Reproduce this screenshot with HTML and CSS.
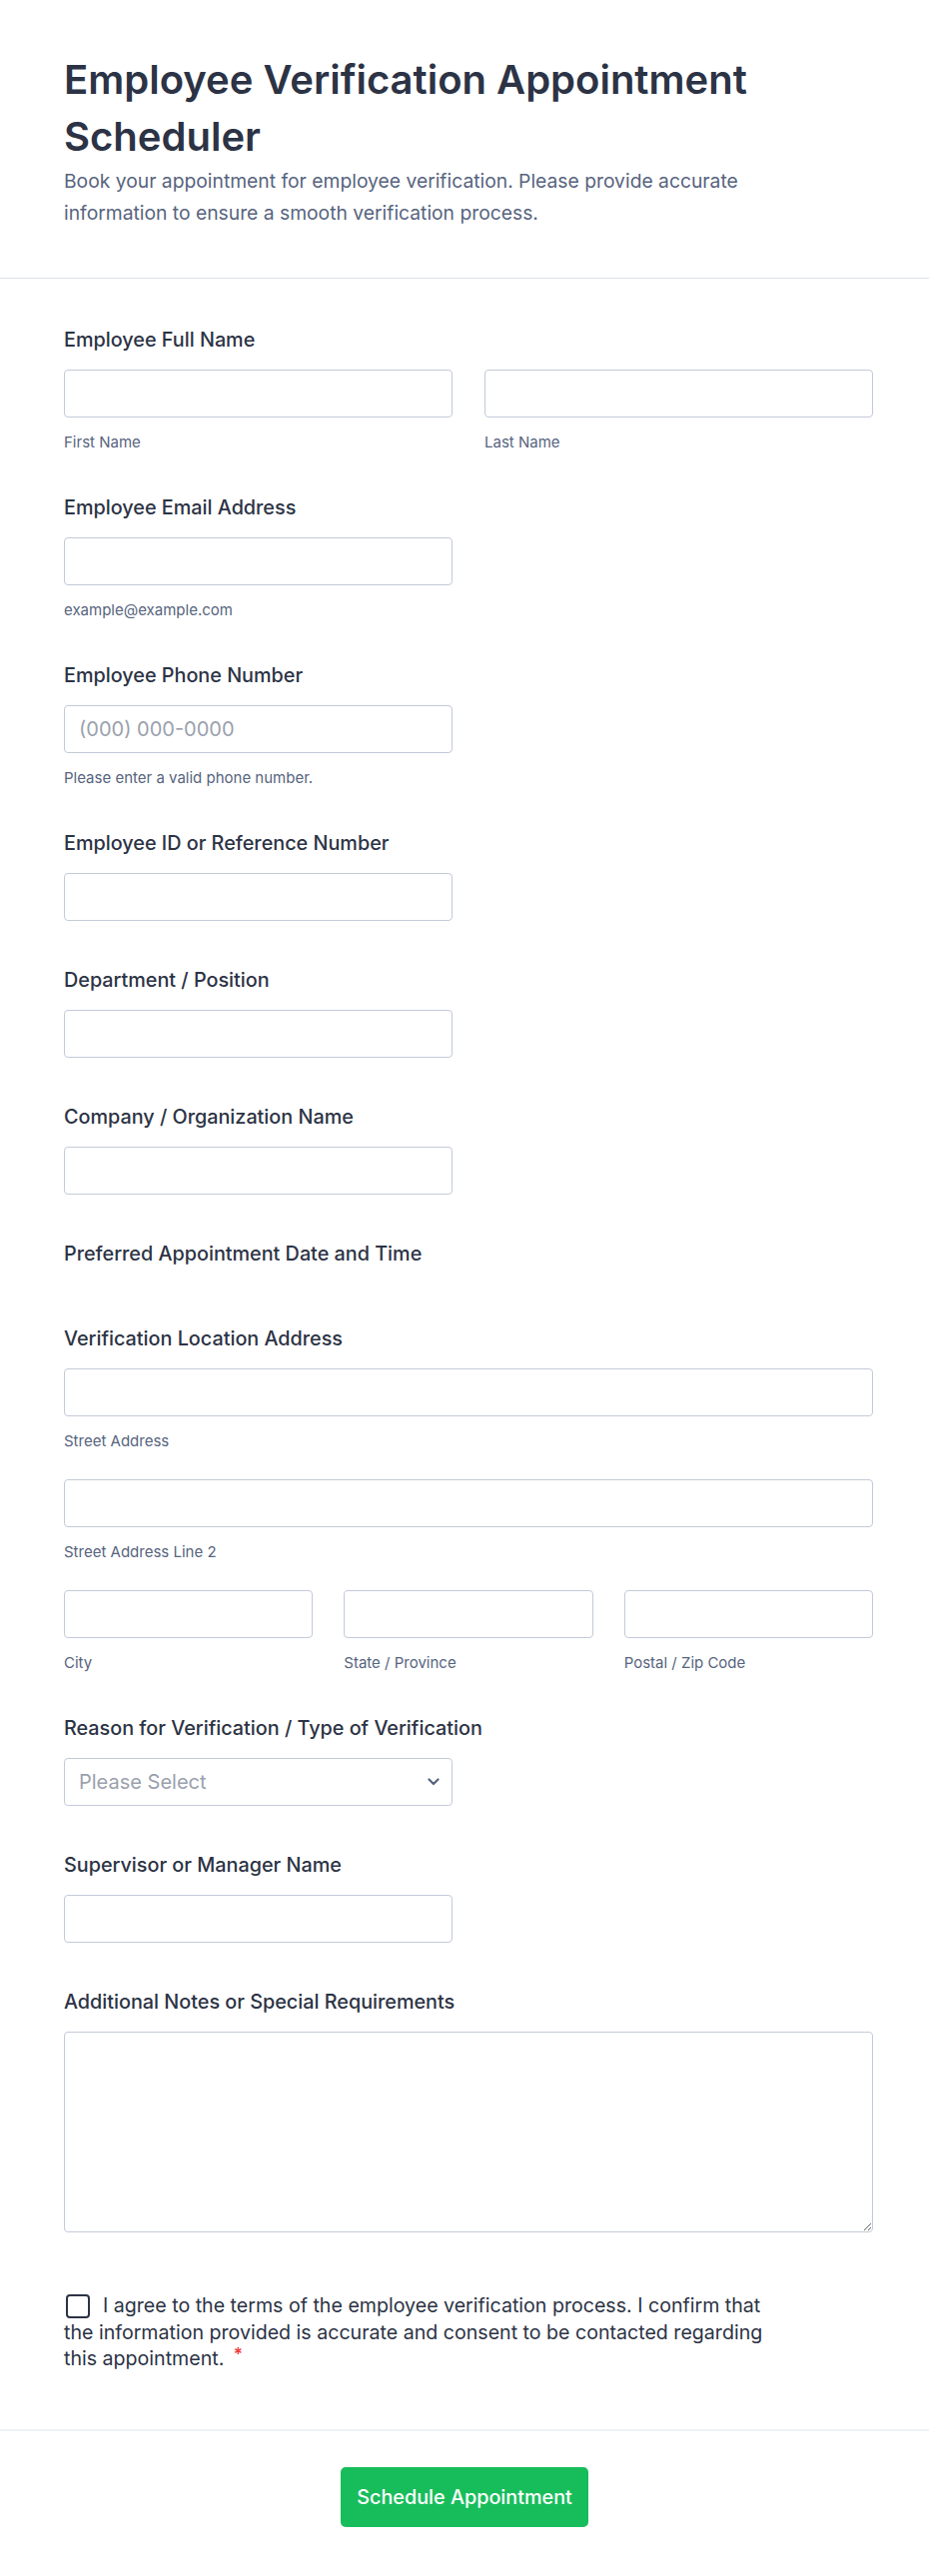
FILE: index.html
```html
<!DOCTYPE html>
<html lang="en">
<head>
<meta charset="utf-8">
<title>Employee Verification Appointment Scheduler</title>
<link rel="stylesheet" href="styles.css">
</head>
<body>
<header class="header">
  <h1 class="title">Employee Verification Appointment Scheduler</h1>
  <p class="subtitle">Book your appointment for employee verification. Please provide accurate information to ensure a smooth verification process.</p>
</header>

<main class="form">
  <div class="field has-sub">
    <div class="label">Employee Full Name</div>
    <div class="row two">
      <div><input class="input" type="text"><div class="sub">First Name</div></div>
      <div><input class="input" type="text"><div class="sub">Last Name</div></div>
    </div>
  </div>

  <div class="field has-sub">
    <div class="label">Employee Email Address</div>
    <div class="half"><input class="input" type="text"><div class="sub">example@example.com</div></div>
  </div>

  <div class="field has-sub">
    <div class="label">Employee Phone Number</div>
    <div class="half"><input class="input" type="text" placeholder="(000) 000-0000"><div class="sub">Please enter a valid phone number.</div></div>
  </div>

  <div class="field">
    <div class="label">Employee ID or Reference Number</div>
    <div class="half"><input class="input" type="text"></div>
  </div>

  <div class="field">
    <div class="label">Department / Position</div>
    <div class="half"><input class="input" type="text"></div>
  </div>

  <div class="field">
    <div class="label">Company / Organization Name</div>
    <div class="half"><input class="input" type="text"></div>
  </div>

  <div class="field date-field">
    <div class="label">Preferred Appointment Date and Time</div>
  </div>

  <div class="field has-sub">
    <div class="label">Verification Location Address</div>
    <div class="addr-line"><input class="input" type="text"><div class="sub">Street Address</div></div>
    <div class="addr-line"><input class="input" type="text"><div class="sub">Street Address Line 2</div></div>
    <div class="row three">
      <div><input class="input" type="text"><div class="sub">City</div></div>
      <div><input class="input" type="text"><div class="sub">State / Province</div></div>
      <div><input class="input" type="text"><div class="sub">Postal / Zip Code</div></div>
    </div>
  </div>

  <div class="field">
    <div class="label">Reason for Verification / Type of Verification</div>
    <div class="half select-wrap">
      <select class="input select"><option>Please Select</option></select>
      <svg class="chevron" width="12" height="8" viewBox="0 0 12 8"><path d="M1.5 1.5 L6 6 L10.5 1.5" fill="none" stroke="#57647e" stroke-width="2.2" stroke-linecap="round" stroke-linejoin="round"/></svg>
    </div>
  </div>

  <div class="field">
    <div class="label">Supervisor or Manager Name</div>
    <div class="half"><input class="input" type="text"></div>
  </div>

  <div class="field last">
    <div class="label">Additional Notes or Special Requirements</div>
    <textarea class="input textarea"></textarea>
  </div>

  <div class="consent">
    <p class="consent-text"><span class="checkbox"></span>I agree to the terms of the employee verification process. I confirm that the information provided is accurate and consent to be contacted regarding this appointment. <span class="req">*</span></p>
  </div>
</main>

<footer class="footer">
  <button class="submit" type="button">Schedule Appointment</button>
</footer>
</body>
</html>
```

FILE: styles.css
```css
* { box-sizing: border-box; }
html, body { margin: 0; padding: 0; background: #ffffff; }
body {
  font-family: Inter, "Noto Sans", "Liberation Sans", sans-serif;
  color: #2c3345;
}

.header {
  padding: 51px 56px 49px 64px;
  border-bottom: 1px solid #dcdfe6;
}
.title {
  margin: 0;
  font-size: 40px;
  line-height: 57px;
  font-weight: 600;
  color: #2c3345;
}
.subtitle {
  margin: 0;
  font-size: 19.3px;
  line-height: 32px;
  color: #57647e;
  max-width: 720px;
}

.form {
  padding: 49px 56px 0 64px;
}
.field { margin-bottom: 47px; }
.field.has-sub { margin-bottom: 44px; }
.field.last { margin-bottom: 60px; }
.field.date-field { padding-bottom: 14px; }

.label {
  font-size: 19.8px;
  line-height: 24px;
  font-weight: 500;
  color: #2c3345;
  margin-bottom: 18px;
}
.date-field .label { margin-bottom: 0; }
.input {
  display: block;
  width: 100%;
  height: 48px;
  margin: 0;
  padding: 0 14px;
  border: 1px solid #c3cad8;
  border-radius: 4px;
  background: #fff;
  font-family: Inter, "Noto Sans", sans-serif;
  font-size: 20px;
  font-weight: 400;
  color: #2c3345;
  outline: none;
}
.input::placeholder { color: #9aa1ad; }
.sub {
  margin-top: 16px;
  font-size: 15px;
  line-height: 18px;
  color: #57647e;
}
.half { width: calc((100% - 32px) / 2); }
.row { display: grid; }
.row.two { grid-template-columns: 1fr 1fr; column-gap: 32px; }
.row.three { grid-template-columns: 1fr 1fr 1fr; column-gap: 31px; }
.addr-line { margin-bottom: 29px; }

.select-wrap { position: relative; }
.select {
  appearance: none;
  -webkit-appearance: none;
  color: #9aa1ad;
  padding-right: 40px;
}
.chevron { position: absolute; right: 13px; top: 20px; }

.textarea {
  height: 201px;
  resize: vertical;
  padding: 12px 14px;
}

.consent { padding-bottom: 57px; }
.consent-text {
  margin: 0;
  max-width: 718px;
  font-size: 19.6px;
  line-height: 26.5px;
  color: #2c3345;
}
.checkbox {
  display: inline-block;
  width: 24px;
  height: 24px;
  border: 2px solid #2c3345;
  border-radius: 4px;
  vertical-align: -6px;
  margin: 0 13px 0 2px;
}
.req {
  color: #f23a3c;
  font-size: 17px;
  line-height: 0;
  vertical-align: 5px;
  margin-left: 4px;
  font-weight: 600;
}

.footer {
  border-top: 2px solid #eef1f6;
  padding: 36px 0 50px;
  display: flex;
  justify-content: center;
}
.submit {
  height: 60px;
  padding: 0 16px;
  border: none;
  border-radius: 5px;
  background: #18bd5b;
  color: #ffffff;
  font-family: Inter, "Noto Sans", sans-serif;
  font-size: 19.8px;
  font-weight: 500;
}
```
